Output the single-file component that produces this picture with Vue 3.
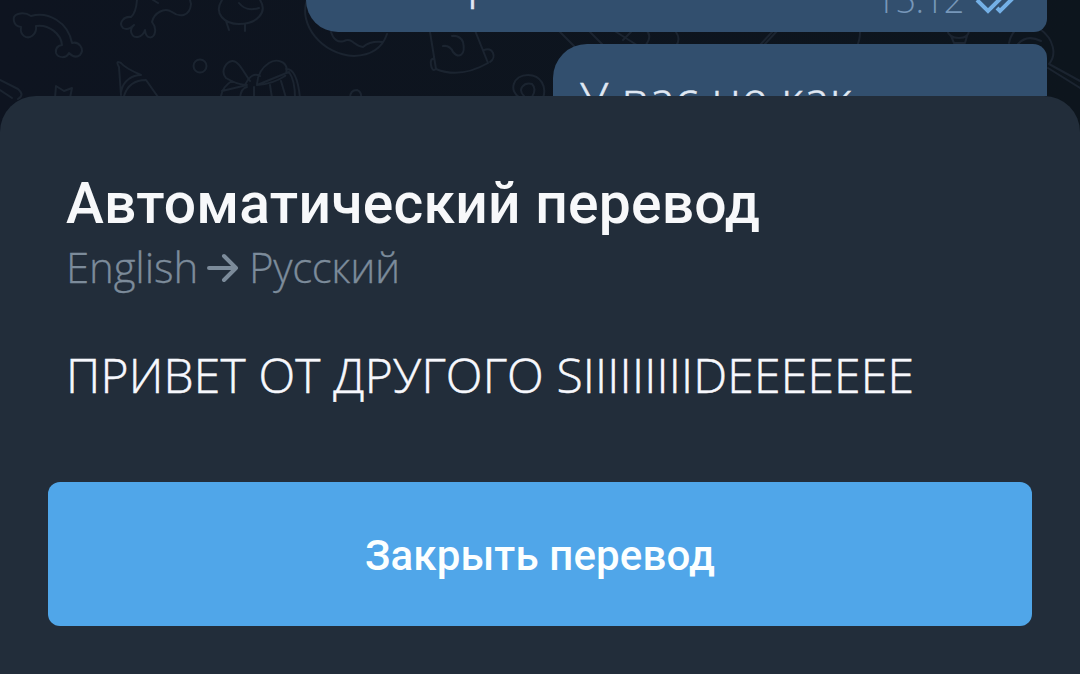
<script setup>
import { ref } from 'vue'

const message = {
  from: 'English',
  to: 'Русский',
  text: 'ПРИВЕТ ОТ ДРУГОГО SIIIIIIIIIDEEEEEEE'
}

const open = ref(true)
</script>

<template>
  <div class="screen">
    <svg class="wallpaper" width="1080" height="140" viewBox="0 0 1080 140" aria-hidden="true">
      <!-- bone -->
      <path d="M21 27C13 26 11 16 18 14Q25 12 31 16C48 11 68 22 72 43C79 41 85 49 80 55Q75 59 69 53C66 59 58 58 56 53Q55 46 62 45C61 34 49 24 36 26C37 34 30 40 24 36Q20 33 21 27" />
      <!-- unicorn -->
      <path d="M137 0Q136 13 131 17C124 16 118 23 123 28Q128 31 134 25C128 30 132 38 138 37Q143 36 145 30C146 40 154 39 155 32Q156 27 152 22C154 13 164 7 172 12C180 18 190 16 191 4L190 0M153 0L158 3" />
      <!-- chick -->
      <path d="M222 0C213 14 225 24 239 24C257 24 268 12 260 0M239 3Q246 12 259 8M226 21L229 30M245 24V31" />
      <circle cx="200" cy="66" r="6.5" />
      <!-- party hat -->
      <path d="M121 95L119 67Q115 60 121 63Q125 68 141 75M121 92C123 80 133 75 141 75M124 96Q129 80 146 80L158 97" />
      <path d="M0 80L18 89Q25 95 18 99M0 90L12 98M55 98L56 86L64 91L72 88L70 98" />
      <!-- gift -->
      <path d="M250 81C243 71 238 60 232 61C226 62 220 71 226 78Q236 84 245 85Q252 71 260 76M257 85Q273 84 285 76C291 63 278 57 269 63Q258 70 257 84M232 81Q223 86 221 96M222 91L247 85M257 85L289 72M240 98Q241 88 247 87M254 87V98M270 85L272 98M281 81L286 98M286 69Q297 68 300 98M289 72Q295 80 295 98" />
      <!-- donut -->
      <path d="M307 0C298 24 322 55 354 56Q380 55 387 34M331 32Q335 44 344 41C352 37 354 46 363 47Q370 41 382 42" />
      <!-- hat -->
      <path d="M430 32L436 69Q432 72 431 65Q430 58 434 59M436 69Q460 79 488 63L474 28M484 50C493 47 497 57 490 62M443 46Q450 45 453 52C459 59 466 55 463 42Q460 35 452 36" />
      <path d="M520 98C508 91 513 75 528 75C541 75 547 87 543 98M524 96C517 89 524 82 532 84Q537 89 532 97M350 98Q350 90 357 90Q362 92 361 98" />
      <path d="M558 30L574 46M588 30L604 46M613 30L640 47M631 32L623 40M646 30Q653 36 645 46M676 32Q681 39 676 46M759 46L774 30M763 46L778 30M860 32Q860 40 857 46M947 30Q949 38 959 38Q969 38 969 30M951 36L954 43H965L967 36" />
      <!-- magnifier -->
      <path d="M1009 43C1013 24 1030 22 1040 29C1054 39 1057 55 1049 64L1080 81M1048 68L1080 88M1018 44Q1027 34 1041 41" />
    </svg>

    <div class="chat">
      <div class="bubble bubble-first">
        <span class="bubble-text">р</span>
        <span class="bubble-time">15:12</span>
        <svg class="checks" width="40" height="30" viewBox="0 0 40 30">
          <path d="M1 16L12 27L36 3M21 24L24 27L48 3" />
        </svg>
      </div>
      <div class="bubble bubble-second">У вас не как</div>
    </div>

    <section v-if="open" class="sheet">
      <h1 class="title">Автоматический перевод</h1>
      <div class="langs">
        <span class="lang-from">{{ message.from }}</span>
        <svg class="arrow" width="32" height="30" viewBox="0 0 32 30">
          <path d="M2 15H29M17 3L29 15L17 27" />
        </svg>
        <span class="lang-to">{{ message.to }}</span>
      </div>
      <p class="translation">{{ message.text }}</p>
      <button class="close" @click="open = false">Закрыть перевод</button>
    </section>
  </div>
</template>

<style>
body {
  background: #0e141f;
}
</style>

<style scoped>
.screen {
  position: relative;
  width: 1080px;
  height: 674px;
  overflow: hidden;
  background: linear-gradient(90deg, #0e1420, #0d151d);
  font-family: "Open Sans", "Noto Sans", sans-serif;
  font-weight: 300;
}

.wallpaper {
  position: absolute;
  top: 0;
  left: 0;
  fill: none;
  stroke: #1b2430;
  stroke-width: 2;
  stroke-linecap: round;
  stroke-linejoin: round;
}

.chat {
  position: relative;
  display: flex;
  flex-direction: column;
  align-items: flex-end;
  gap: 12px;
  height: 96px;
  padding-right: 33px;
  overflow: hidden;
}

.bubble {
  box-sizing: border-box;
  flex-shrink: 0;
  background: #324f6e;
  color: #e0e8f3;
  font-size: 48px;
  white-space: nowrap;
}

.bubble-first {
  position: relative;
  width: 741px;
  height: 32px;
  border-radius: 0 0 14px 34px;
}

/* the message scrolls out above the screen, only its last line shows */
.bubble-text {
  position: absolute;
  left: 161px;
  bottom: 22px;
  line-height: 60px;
  -webkit-text-stroke: 0.6px currentColor;
}

.bubble-time {
  position: absolute;
  right: 83px;
  bottom: 8px;
  color: #7797b9;
  font-size: 36px;
  line-height: 48px;
  letter-spacing: -0.4px;
}

.checks {
  position: absolute;
  right: 31px;
  bottom: 18px;
  overflow: visible;
  fill: none;
  stroke: #74b0e6;
  stroke-width: 4;
}

.bubble-second {
  width: 494px;
  height: 80px;
  padding: 22px 0 0 27px;
  border-radius: 34px 14px 0 0;
  line-height: 66px;
  letter-spacing: 0.5px;
  -webkit-text-stroke: 0.6px currentColor;
}

.sheet {
  position: relative;
  box-sizing: border-box;
  height: 578px;
  padding: 74px 48px 48px;
  display: flex;
  flex-direction: column;
  border-radius: 36px 36px 0 0;
  background: #222d3a;
}

.title {
  margin: 0 0 0 18px;
  font-family: Roboto, sans-serif;
  font-size: 57px;
  font-weight: 500;
  line-height: 68px;
  letter-spacing: 0.22px;
  color: #f7f8fa;
  white-space: nowrap;
}

.langs {
  display: flex;
  align-items: center;
  height: 58px;
  margin-left: 18px;
  font-size: 42px;
  line-height: 58px;
  color: #7c8b9a;
  -webkit-text-stroke: 0.3px currentColor;
}

.lang-from {
  letter-spacing: -0.15px;
}

.lang-to {
  letter-spacing: -0.4px;
}

.arrow {
  margin: 2px 10px 0 9px;
  fill: none;
  stroke: #7c8b9a;
  stroke-width: 4;
  stroke-linecap: round;
  stroke-linejoin: round;
}

.translation {
  margin: 46px 0 0 18px;
  font-size: 48px;
  line-height: 66px;
  letter-spacing: 0.18px;
  color: #f7f8fd;
  white-space: nowrap;
  -webkit-text-stroke: 0.5px currentColor;
}

.close {
  height: 144px;
  margin-top: auto;
  padding: 2px 0 0;
  border: none;
  border-radius: 12px;
  background: #50a6e9;
  color: #fcffff;
  font-family: Roboto, sans-serif;
  font-size: 42px;
  font-weight: 500;
  letter-spacing: 0.15px;
  cursor: pointer;
}
</style>
